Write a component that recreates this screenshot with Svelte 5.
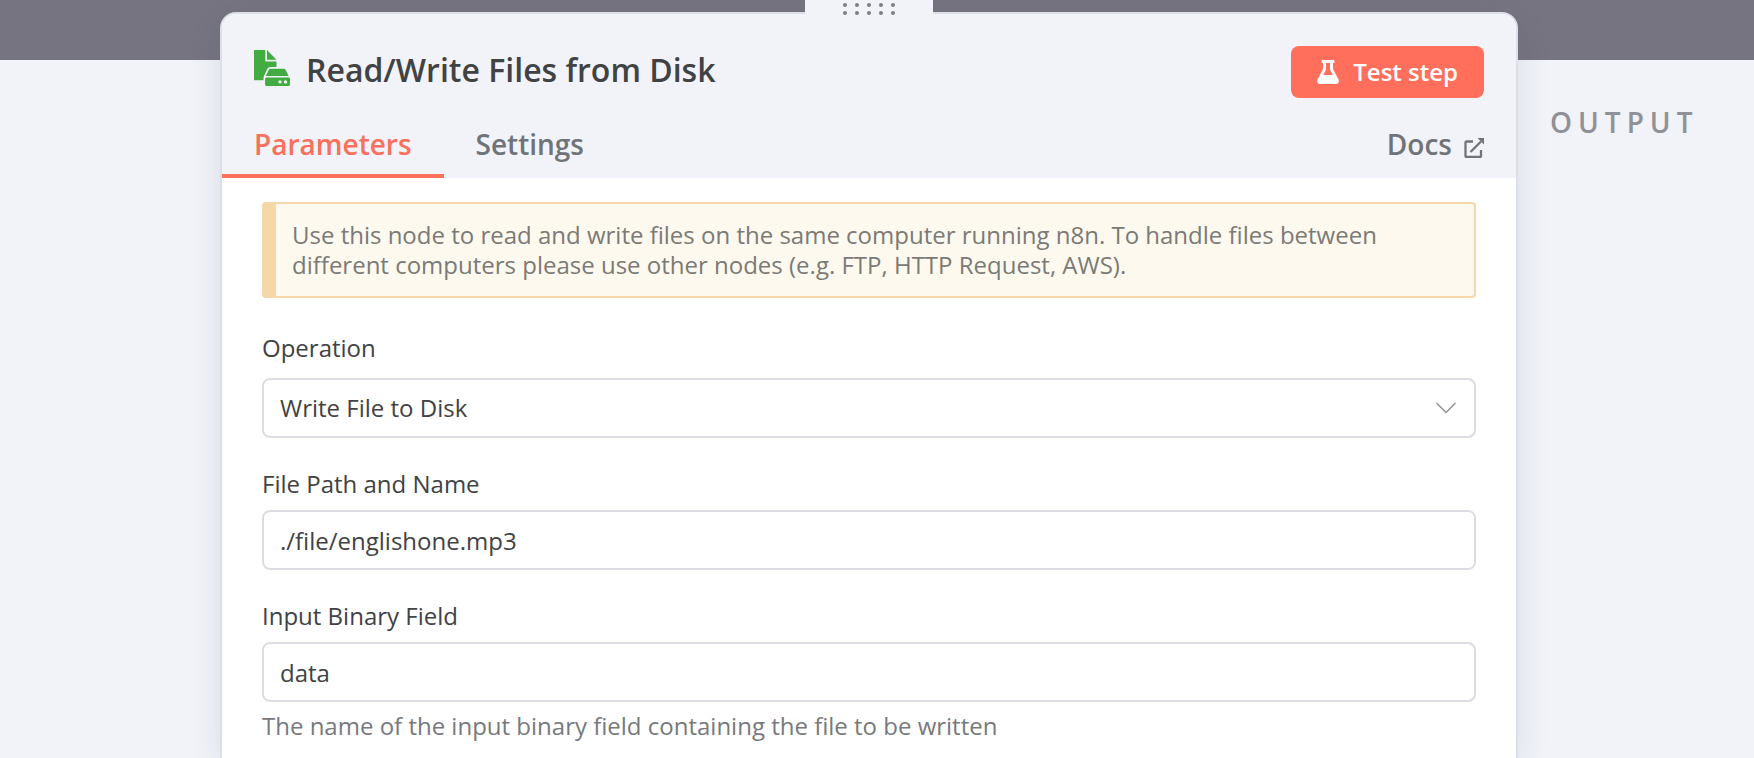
<script>
  let operation = $state('Write File to Disk');
  let filePath = $state('./file/englishone.mp3');
  let binaryField = $state('data');
  const dots = [0, 1, 2, 3, 4];
</script>

<div class="page">
  <div class="topbar"></div>

  <main class="panel">
    <button class="handle" aria-label="Move panel">
      <svg width="52" height="16" viewBox="0 0 52 16" aria-hidden="true">
        {#each dots as i}
          <circle cx={2 + i * 12} cy="5" r="2" />
          <circle cx={2 + i * 12} cy="13" r="2" />
        {/each}
      </svg>
    </button>

    <header>
      <div class="heading">
        <div class="title">
          <svg width="36" height="40" viewBox="0 0 36 40" aria-hidden="true">
            <path d="M0 0h11.3v11.6h11.2v5.4h-5.700c-1.600 0-3 .9-3.700 2.300l-3 6.500c-.4.800-.6 1.600-.6 2.500v2H0z" />
            <path d="M13 0l9.500 9.700H13z" />
            <path d="M16.600 18.700h13.200c.8 0 1.500.4 1.900 1.200l2.900 6.200H11.800l2.900-6.200c.4-.8 1.100-1.200 1.900-1.200z" />
            <path fill-rule="evenodd" d="M12.600 27.600h21.900c.9 0 1.500.7 1.500 1.500v5.400c0 .9-.7 1.500-1.500 1.500H12.600c-.9 0-1.500-.7-1.500-1.500v-5.400c0-.9.700-1.500 1.500-1.500zM26 30.200a1.700 1.700 0 1 0 0 3.400a1.700 1.700 0 1 0 0-3.400zM31.500 30.200a1.700 1.700 0 1 0 0 3.400a1.700 1.700 0 1 0 0-3.400z" />
          </svg>
          <h1>Read/Write Files from Disk</h1>
        </div>
        <button class="run">
          <svg width="22" height="24" viewBox="0 0 22 24" aria-hidden="true">
            <path fill-rule="evenodd" d="M5.500 0h11c.6 0 1 .4 1 1v1c0 .6-.4 1-1 1H16v6l5.500 10.400c1.100 2.100-.2 4.600-2.600 4.600H3.100c-2.400 0-3.700-2.500-2.600-4.600L6 9V3h-.5c-.6 0-1-.4-1-1V1c0-.6.4-1 1-1zM9 3v6.800L6.200 15h9.600L13 9.800V3z" />
          </svg>
          Test step
        </button>
      </div>

      <nav>
        <a class="tab active" href="#parameters">Parameters</a>
        <a class="tab" href="#settings">Settings</a>
        <a class="docs" href="#docs">
          Docs
          <svg width="20" height="20" viewBox="0 0 20 20" aria-hidden="true">
            <path d="M9 3.500H2.500a1 1 0 0 0-1 1v13.500a1 1 0 0 0 1 1h13.500a1 1 0 0 0 1-1V12M6.500 14L17 3.500" fill="none" stroke="currentColor" stroke-width="2.300" />
            <path d="M13.500 0H20v6.500z" fill="currentColor" />
          </svg>
        </a>
      </nav>
    </header>

    <form>
      <p class="notice">Use this node to read and write files on the same computer running n8n. To handle files between different computers please use other nodes (e.g. FTP, HTTP Request, AWS).</p>

      <div class="field first">
        <label for="operation">Operation</label>
        <div class="select">
          <select id="operation" bind:value={operation}>
            <option>Write File to Disk</option>
          </select>
          <svg width="20" height="12" viewBox="0 0 20 12" aria-hidden="true">
            <path d="M.500 1L10 10.500L19.500 1" fill="none" stroke="currentColor" stroke-width="1.500" />
          </svg>
        </div>
      </div>

      <div class="field">
        <label for="path">File Path and Name</label>
        <input id="path" type="text" bind:value={filePath} />
      </div>

      <div class="field">
        <label for="binary">Input Binary Field</label>
        <input id="binary" type="text" bind:value={binaryField} aria-describedby="binary-hint" />
        <p class="hint" id="binary-hint">The name of the input binary field containing the file to be written</p>
      </div>
    </form>
  </main>

  <aside><h2>OUTPUT</h2></aside>
</div>

<style>
  :global(body) {
    margin: 0;
    overflow: hidden;
  }
  .page {
    display: grid;
    grid-template-columns: 220px minmax(0, 1fr) 236px;
    grid-template-rows: 60px 1fr;
    height: 100vh;
    overflow: hidden;
    background: #f1f3f9;
    color: #414244;
    font-family: "Open Sans", sans-serif;
    font-size: 24px;
    line-height: 30px;
  }
  .page * {
    box-sizing: border-box;
  }
  .topbar {
    grid-column: 1 / -1;
    grid-row: 1;
    background: #767480;
  }
  .panel {
    grid-column: 2;
    grid-row: 1 / 3;
    position: relative;
    margin-top: 12px;
    border: 2px solid #dbdfe7;
    border-bottom: 0;
    border-radius: 16px 16px 0 0;
    background: #fff;
    box-shadow: 0 8px 32px rgba(50, 61, 85, 0.12);
  }
  .handle {
    position: absolute;
    top: -14px;
    left: 50%;
    display: flex;
    justify-content: center;
    width: 128px;
    height: 18px;
    margin: 0 0 0 -64px;
    padding: 0;
    border: 0;
    background: #f1f3f9;
    fill: #7d7d87;
  }
  header {
    padding-top: 32px;
    border-radius: 14px 14px 0 0;
    background: #f1f3f9;
  }
  .heading {
    display: flex;
    align-items: flex-start;
    justify-content: space-between;
    padding: 0 32px;
  }
  .title {
    display: flex;
    align-items: center;
    gap: 16px;
    fill: #42ab42;
  }
  h1 {
    margin: 0;
    font-size: 32px;
    font-weight: 600;
    line-height: 48px;
  }
  .run {
    display: flex;
    align-items: center;
    gap: 14px;
    height: 52px;
    padding: 0 26px;
    border: 0;
    border-radius: 8px;
    background: #ff6f5c;
    color: #fff;
    fill: #fff;
    font: 600 24px/30px "Open Sans", sans-serif;
  }
  nav {
    display: flex;
    margin-top: 28px;
    font-size: 28px;
    font-weight: 600;
    line-height: 36px;
  }
  nav a {
    padding: 0 32px 12px;
    border-bottom: 4px solid transparent;
    color: #707378;
    text-decoration: none;
  }
  nav .active {
    border-color: #f9705c;
    color: #f9705c;
  }
  .docs {
    display: flex;
    align-items: center;
    gap: 12px;
    margin-left: auto;
  }
  .docs svg {
    margin-top: 8px;
  }
  form {
    padding: 24px 40px;
  }
  .notice {
    margin: 0;
    padding: 16px;
    border: 2px solid #f5d8a9;
    border-left-width: 14px;
    border-radius: 4px;
    background: #fdf9ef;
    color: #7b7a76;
  }
  .field {
    display: flex;
    flex-direction: column;
    gap: 11px;
    margin-top: 31px;
  }
  .first {
    gap: 15px;
    margin-top: 35px;
  }
  .select {
    display: grid;
    align-items: center;
    color: #909298;
  }
  .select > * {
    grid-area: 1 / 1;
  }
  .select svg {
    justify-self: end;
    margin-right: 20px;
    pointer-events: none;
  }
  select,
  input {
    appearance: none;
    width: 100%;
    height: 60px;
    margin: 0;
    padding: 0 16px;
    border: 2px solid #dbdde2;
    border-radius: 8px;
    background: #fff;
    color: #414244;
    font: 400 24px/30px "Open Sans", sans-serif;
  }
  .hint {
    margin: -2px 0 0;
    color: #77797d;
  }
  aside {
    grid-column: 3;
    grid-row: 2;
    padding: 44px 0 0 32px;
  }
  h2 {
    margin: 0;
    color: #8f9196;
    font-size: 28px;
    font-weight: 600;
    letter-spacing: 6px;
    line-height: 36px;
  }
</style>
